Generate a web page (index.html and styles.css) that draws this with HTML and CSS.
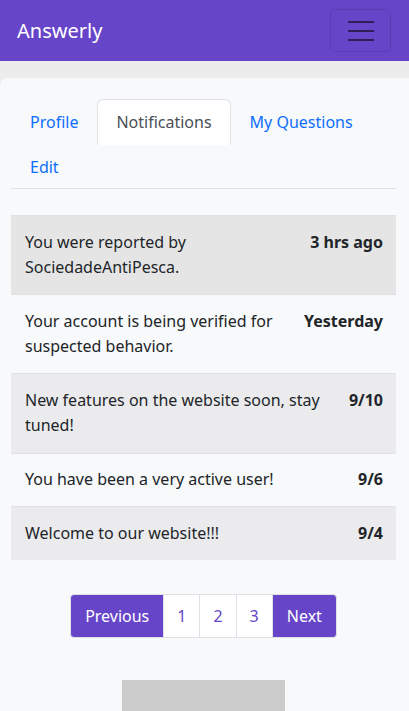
FILE: index.html
```html
<!DOCTYPE html>
<html lang="en">
<head>
<meta charset="utf-8">
<meta name="viewport" content="width=device-width, initial-scale=1">
<title>Answerly - Notifications</title>
<link rel="stylesheet" href="styles.css">
</head>
<body>
<nav class="navbar">
  <a class="brand" href="#">Answerly</a>
  <button class="toggler" type="button" aria-label="Toggle navigation">
    <svg width="26" height="20" viewBox="0 0 26 20" aria-hidden="true">
      <path d="M0 1h26M0 10h26M0 19h26" stroke="rgba(0,0,0,0.55)" stroke-width="2"/>
    </svg>
  </button>
</nav>
<div class="page">
  <main class="card">
    <ul class="tabs">
      <li><a class="tab" href="#">Profile</a></li>
      <li><a class="tab active" href="#">Notifications</a></li>
      <li><a class="tab" href="#">My Questions</a></li>
      <li><a class="tab" href="#">Edit</a></li>
    </ul>
    <ul class="list">
      <li class="item dark"><span class="msg">You were reported by SociedadeAntiPesca.</span><span class="when">3 hrs ago</span></li>
      <li class="item"><span class="msg">Your account is being verified for suspected behavior.</span><span class="when">Yesterday</span></li>
      <li class="item alt"><span class="msg">New features on the website soon, stay tuned!</span><span class="when">9/10</span></li>
      <li class="item"><span class="msg">You have been a very active user!</span><span class="when">9/6</span></li>
      <li class="item alt"><span class="msg">Welcome to our website!!!</span><span class="when">9/4</span></li>
    </ul>
    <nav class="pager">
      <a class="pg filled first" href="#">Previous</a>
      <a class="pg" href="#">1</a>
      <a class="pg" href="#">2</a>
      <a class="pg" href="#">3</a>
      <a class="pg filled last" href="#">Next</a>
    </nav>
    <div class="placeholder"></div>
  </main>
</div>
</body>
</html>
```
FILE: styles.css
```css
* { box-sizing: border-box; }
html, body { margin: 0; padding: 0; }
body {
  font-family: "Noto Sans", "Open Sans", sans-serif;
  font-size: 16px;
  line-height: 24px;
  color: #212529;
  background: #ececec;
}
a { text-decoration: none; }
.navbar {
  height: 61px;
  background: #6645c8;
  display: flex;
  align-items: center;
  justify-content: space-between;
  padding: 0 18px 0 17px;
}
.brand {
  color: #fff;
  font-size: 20px;
  line-height: 30px;
}
.toggler {
  width: 61px;
  height: 43px;
  background: transparent;
  border: 1px solid rgba(0,0,0,0.1);
  border-radius: 5px;
  display: flex;
  align-items: center;
  justify-content: center;
  padding: 0;
}
.page { padding-top: 17px; }
.card {
  background: #f8f9fa;
  border-top-left-radius: 8px;
  padding: 21px 13px 0 11px;
  min-height: 800px;
}
.tabs {
  list-style: none;
  margin: 0;
  padding: 0;
  display: flex;
  flex-wrap: wrap;
  border-bottom: 1px solid #dee2e6;
}
.tabs li { margin-bottom: -1px; }
.tabs li:last-child .tab { padding-bottom: 9px; }
.tab {
  display: block;
  padding: 10px 18px;
  line-height: 24px;
  color: #0d6efd;
  border: 1px solid transparent;
  border-radius: 6px 6px 0 0;
}
.tab.active {
  color: #495057;
  background: #fff;
  border-color: #dee2e6 #dee2e6 #fff;
}
.list {
  list-style: none;
  margin: 26px 0 0;
  padding: 0;
}
.item {
  display: flex;
  justify-content: space-between;
  gap: 20px;
  padding: 13.5px 13px 13.5px 14px;
  line-height: 25.6px;
  border: 1px solid #dee2e6;
  border-left: 0;
  border-right: 0;
  border-top: 0;
  background: #f8f9fa;
}
.item:first-child { border-top: 1px solid #dee2e6; }
.item:last-child { border-bottom: 0; }
.item.dark { background: #e5e5e5; }
.item.alt { background: #ebebed; }
.when { font-weight: 700; white-space: nowrap; }
.pager {
  display: flex;
  justify-content: center;
  margin-top: 34px;
}
.pg {
  display: block;
  padding: 9px 13px;
  line-height: 24px;
  color: #6645c8;
  background: #fff;
  border: 1px solid #dee2e6;
  margin-left: -1px;
}
.pg.filled { background: #6645c8; color: #fff; padding: 9px 14px; }
.pg.first { border-radius: 4px 0 0 4px; margin-left: 0; }
.pg.last { border-radius: 0 4px 4px 0; }
.placeholder {
  width: 163px;
  height: 120px;
  background: #cccccc;
  margin: 42px auto 0;
}
```
